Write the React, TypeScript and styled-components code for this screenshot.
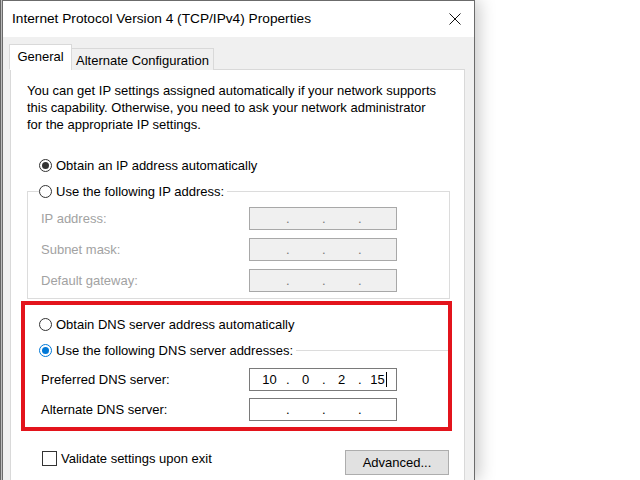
import React from "react";
import styled, { createGlobalStyle } from "styled-components";

const Global = createGlobalStyle`
  html, body { margin: 0; padding: 0; background: #ffffff; overflow: hidden; }
  body { font-family: "Liberation Sans", Arial, sans-serif; }
  #root { width: 640px; height: 480px; }
`;

const Page = styled.div`
  display: flex;
  width: 640px;
  height: 480px;
  overflow: hidden;
  background: #ffffff;
`;

const Backdrop = styled.div`
  width: 2px;
  flex: none;
  background: linear-gradient(to right, #6a6a6a 0, #6a6a6a 1px, #c8c8c8 1px);
`;

const Dialog = styled.div`
  width: 473px;
  flex: none;
  box-sizing: border-box;
  display: flex;
  flex-direction: column;
  border: 1px solid #6b6b6b;
  border-bottom: none;
  box-shadow: 4px 0 16px rgba(0, 0, 0, 0.22);
  background: #f0f0f0;
`;

const TitleBar = styled.div`
  height: 36px;
  flex: none;
  display: flex;
  align-items: center;
  justify-content: space-between;
  background: #ffffff;
  padding: 0 13px 0 9px;
`;

const Title = styled.div`
  font-family: "Liberation Sans", Arial, sans-serif;
  font-size: 13.7px;
  color: #000;
  padding-bottom: 1px;
`;

const CloseIcon = styled.svg`
  width: 12px;
  height: 12px;
  display: block;
`;

const Body = styled.div`
  flex: 1;
  display: flex;
  flex-direction: column;
  padding: 8px 9px 0 7px;
`;

const Tabs = styled.div`
  display: flex;
  align-items: flex-end;
  height: 25px;
  position: relative;
  z-index: 1;
  margin-bottom: -1px;
`;

const Tab = styled.div<{ $active?: boolean }>`
  box-sizing: border-box;
  font-size: 13px;
  color: #000;
  border: 1px solid #d9d9d9;
  display: flex;
  align-items: center;
  justify-content: center;
  ${(p) =>
    p.$active
      ? `height: 26px; width: 63px; margin-left: -1px; background: #fff; border-bottom-color: #fff; padding-bottom: 2px;`
      : `height: 22px; width: 143px; margin-left: -1px; background: #f0f0f0; border-bottom: none; padding-top: 1px;`}
`;

const Panel = styled.div`
  flex: 1;
  background: #ffffff;
  border: 1px solid #d9d9d9;
  border-bottom: none;
  font-size: 13px;
  color: #000;
`;

const Intro = styled.p`
  margin: 0;
  padding: 12px 0 0 16px;
  line-height: 17px;
`;

const RadioRow = styled.label<{ $mt: number; $ml: number }>`
  display: flex;
  align-items: center;
  height: 18px;
  margin: ${(p) => p.$mt}px 0 0 ${(p) => p.$ml}px;
  gap: 4px;
  color: #000;
`;

const RadioDot = styled.span<{ $checked?: boolean; $focus?: boolean }>`
  width: 13px;
  height: 13px;
  box-sizing: border-box;
  border-radius: 50%;
  border: 1px solid ${(p) => (p.$focus ? "#0078d7" : "#333333")};
  background: #fff;
  display: flex;
  align-items: center;
  justify-content: center;
  flex: none;
  &::after {
    content: "";
    display: ${(p) => (p.$checked ? "block" : "none")};
    width: 7px;
    height: 7px;
    border-radius: 50%;
    background: ${(p) => (p.$focus ? "#0078d7" : "#333333")};
  }
`;

const Group = styled.fieldset<{ $ml: number; $mr: number; $pt: number; $pl: number; $pb: number; $open?: boolean }>`
  margin: 8px ${(p) => p.$mr}px 0 ${(p) => p.$ml}px;
  padding: ${(p) => p.$pt}px 0 ${(p) => p.$pb}px ${(p) => p.$pl}px;
  border: 1px solid #dcdcdc;
  ${(p) => (p.$open ? "border-left: none; border-right: none; border-bottom: none;" : "")}
  min-width: 0;
`;

const Legend = styled.legend<{ $ml: number }>`
  padding: 0 3px 0 0;
  margin-left: ${(p) => p.$ml}px;
  height: 18px;
  display: flex;
  align-items: center;
  gap: 4px;
  color: #000;
`;

const FieldGrid = styled.div<{ $gap: number }>`
  display: grid;
  grid-template-columns: 208px 148px;
  grid-auto-rows: 23px;
  row-gap: ${(p) => p.$gap}px;
  align-items: center;
`;

const FieldLabel = styled.span<{ $disabled?: boolean }>`
  color: ${(p) => (p.$disabled ? "#a2a2a2" : "#000")};
`;

const IpBox = styled.div<{ $disabled?: boolean }>`
  box-sizing: border-box;
  height: 23px;
  border: 1px solid ${(p) => (p.$disabled ? "#a8a8a8" : "#7a7a7a")};
  background: ${(p) => (p.$disabled ? "#f0f0f0" : "#ffffff")};
  color: ${(p) => (p.$disabled ? "#7a7a7a" : "#000")};
  display: grid;
  grid-template-columns: 33px 3px 33px 3px 33px 3px 33px;
  padding-left: 3px;
  align-items: center;
  font-size: 13px;
  line-height: 21px;
`;

const Octet = styled.span`
  text-align: center;
  white-space: nowrap;
`;

const Dot = styled.span`
  text-align: center;
`;

const Caret = styled.span`
  display: inline-block;
  width: 1px;
  height: 15px;
  background: #000;
  vertical-align: -3px;
  margin-left: 1px;
  margin-right: -2px;
`;

const Highlight = styled.div`
  margin: 2px 12px 0 10px;
  height: 130px;
  box-sizing: border-box;
  border: 4px solid #e3141c;
  padding: 10px 0 0 0;
`;

const Footer = styled.div`
  display: flex;
  justify-content: space-between;
  align-items: flex-start;
  margin: 20px 15px 0 31px;
`;

const CheckRow = styled.label`
  display: flex;
  align-items: center;
  gap: 4px;
  height: 15px;
  color: #000;
`;

const CheckBox = styled.span`
  width: 15px;
  height: 15px;
  box-sizing: border-box;
  border: 1px solid #333;
  background: #fff;
`;

const Button = styled.button`
  width: 104px;
  height: 25px;
  box-sizing: border-box;
  border: 1px solid #adadad;
  background: #e1e1e1;
  font-family: "Liberation Sans", Arial, sans-serif;
  font-size: 13px;
  color: #000;
  padding: 0;
  margin-top: -1px;
`;

type IpProps = { values?: string[]; disabled?: boolean; caret?: boolean };

const IpField = ({ values = ["", "", "", ""], disabled, caret }: IpProps) => (
  <IpBox $disabled={disabled}>
    <Octet>{values[0]}</Octet>
    <Dot>.</Dot>
    <Octet>{values[1]}</Octet>
    <Dot>.</Dot>
    <Octet>{values[2]}</Octet>
    <Dot>.</Dot>
    <Octet>
      {values[3]}
      {caret && <Caret />}
    </Octet>
  </IpBox>
);

export default function App() {
  return (
    <>
      <Global />
      <Page>
        <Backdrop />
        <Dialog>
          <TitleBar>
            <Title>Internet Protocol Version 4 (TCP/IPv4) Properties</Title>
            <CloseIcon viewBox="0 0 12 12">
              <path d="M0.5 0.5 L11.5 11.5 M11.5 0.5 L0.5 11.5" stroke="#111" strokeWidth="1" fill="none" />
            </CloseIcon>
          </TitleBar>
          <Body>
            <Tabs>
              <Tab $active>General</Tab>
              <Tab>Alternate Configuration</Tab>
            </Tabs>
            <Panel>
              <Intro>
                You can get IP settings assigned automatically if your network supports
                <br />
                this capability. Otherwise, you need to ask your network administrator
                <br />
                for the appropriate IP settings.
              </Intro>
              <RadioRow $mt={23} $ml={28}>
                <RadioDot $checked />
                Obtain an IP address automatically
              </RadioRow>
              <Group $ml={16} $mr={14} $pt={7} $pl={13} $pb={6}>
                <Legend $ml={-2}>
                  <RadioDot />
                  Use the following IP address:
                </Legend>
                <FieldGrid $gap={8}>
                  <FieldLabel $disabled>IP address:</FieldLabel>
                  <IpField disabled />
                  <FieldLabel $disabled>Subnet mask:</FieldLabel>
                  <IpField disabled />
                  <FieldLabel $disabled>Default gateway:</FieldLabel>
                  <IpField disabled />
                </FieldGrid>
              </Group>
              <Highlight>
                <RadioRow $mt={0} $ml={14}>
                  <RadioDot />
                  Obtain DNS server address automatically
                </RadioRow>
                <Group $ml={14} $mr={0} $pt={9} $pl={2} $pb={0} $open>
                  <Legend $ml={-2}>
                    <RadioDot $checked $focus />
                    Use the following DNS server addresses:
                  </Legend>
                  <FieldGrid $gap={7}>
                    <FieldLabel>Preferred DNS server:</FieldLabel>
                    <IpField values={["10", "0", "2", "15"]} caret />
                    <FieldLabel>Alternate DNS server:</FieldLabel>
                    <IpField />
                  </FieldGrid>
                </Group>
              </Highlight>
              <Footer>
                <CheckRow>
                  <CheckBox />
                  Validate settings upon exit
                </CheckRow>
                <Button>Advanced...</Button>
              </Footer>
            </Panel>
          </Body>
        </Dialog>
      </Page>
    </>
  );
}
